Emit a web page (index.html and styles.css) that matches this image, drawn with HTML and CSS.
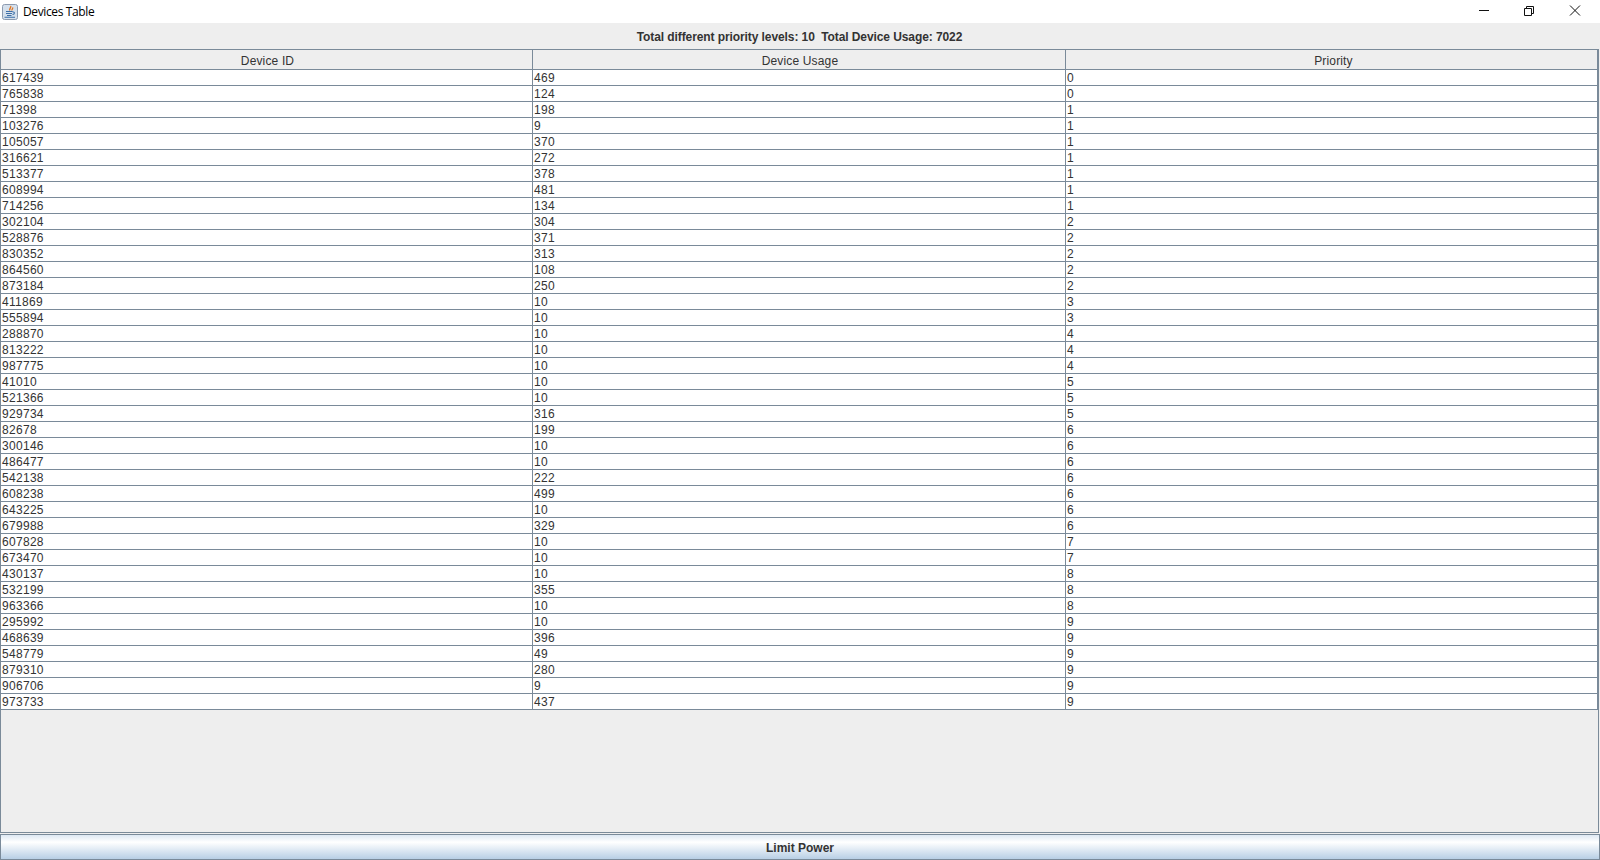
FILE: index.html
```html
<!DOCTYPE html>
<html lang="en">
<head>
    <meta charset="UTF-8">
    <meta name="viewport" content="width=device-width, initial-scale=1.0">
    <title>Devices Table</title>
    <link rel="stylesheet" href="styles.css">
</head>
<body>
    <header class="title-bar">
        <svg class="app-icon" width="16" height="16" viewBox="0 0 16 16">
            <rect x="0.5" y="0.5" width="15" height="15" rx="2" fill="#d5e0ec" stroke="#8c9bb0"/>
            <path d="M8.500 2c1.500 1.500-2 2.500-.5 4.500M10.500 3.500c1 1-1 1.500-.5 3" fill="none" stroke="#e2731c" stroke-width="1.300"/>
            <path d="M4 7.500h6.500M4 9.500h6M5 11.500h4.500M10.500 8c2.500-.5 2.500 2 0 2.500M2.500 13.200h10.500" fill="none" stroke="#3c6fa8" stroke-width="1.100"/>
        </svg>
        <span class="title-text">Devices Table</span>
        <div class="window-buttons">
            <svg class="win-btn" width="45" height="23" viewBox="0 0 45 23"><path d="M17 10.500h10" stroke="#111" fill="none"/></svg>
            <svg class="win-btn" width="45" height="23" viewBox="0 0 45 23"><path d="M17.500 8.500h7v7h-7zM19.500 8.500v-2h7v7h-2" stroke="#111" fill="none"/></svg>
            <svg class="win-btn" width="45" height="23" viewBox="0 0 45 23"><path d="M18 5.500l10 10M28 5.500l-10 10" stroke="#111" fill="none"/></svg>
        </div>
    </header>

    <main class="content">
        <div class="summary">Total different priority levels: 10&nbsp;&nbsp;Total Device Usage: 7022</div>

        <div class="scroll-pane">
            <table class="devices">
                <colgroup>
                    <col class="col-id">
                    <col class="col-usage">
                    <col>
                </colgroup>
                <thead>
                    <tr><th>Device ID</th><th>Device Usage</th><th>Priority</th></tr>
                </thead>
                <tbody>
                    <tr><td>617439</td><td>469</td><td>0</td></tr>
                    <tr><td>765838</td><td>124</td><td>0</td></tr>
                    <tr><td>71398</td><td>198</td><td>1</td></tr>
                    <tr><td>103276</td><td>9</td><td>1</td></tr>
                    <tr><td>105057</td><td>370</td><td>1</td></tr>
                    <tr><td>316621</td><td>272</td><td>1</td></tr>
                    <tr><td>513377</td><td>378</td><td>1</td></tr>
                    <tr><td>608994</td><td>481</td><td>1</td></tr>
                    <tr><td>714256</td><td>134</td><td>1</td></tr>
                    <tr><td>302104</td><td>304</td><td>2</td></tr>
                    <tr><td>528876</td><td>371</td><td>2</td></tr>
                    <tr><td>830352</td><td>313</td><td>2</td></tr>
                    <tr><td>864560</td><td>108</td><td>2</td></tr>
                    <tr><td>873184</td><td>250</td><td>2</td></tr>
                    <tr><td>411869</td><td>10</td><td>3</td></tr>
                    <tr><td>555894</td><td>10</td><td>3</td></tr>
                    <tr><td>288870</td><td>10</td><td>4</td></tr>
                    <tr><td>813222</td><td>10</td><td>4</td></tr>
                    <tr><td>987775</td><td>10</td><td>4</td></tr>
                    <tr><td>41010</td><td>10</td><td>5</td></tr>
                    <tr><td>521366</td><td>10</td><td>5</td></tr>
                    <tr><td>929734</td><td>316</td><td>5</td></tr>
                    <tr><td>82678</td><td>199</td><td>6</td></tr>
                    <tr><td>300146</td><td>10</td><td>6</td></tr>
                    <tr><td>486477</td><td>10</td><td>6</td></tr>
                    <tr><td>542138</td><td>222</td><td>6</td></tr>
                    <tr><td>608238</td><td>499</td><td>6</td></tr>
                    <tr><td>643225</td><td>10</td><td>6</td></tr>
                    <tr><td>679988</td><td>329</td><td>6</td></tr>
                    <tr><td>607828</td><td>10</td><td>7</td></tr>
                    <tr><td>673470</td><td>10</td><td>7</td></tr>
                    <tr><td>430137</td><td>10</td><td>8</td></tr>
                    <tr><td>532199</td><td>355</td><td>8</td></tr>
                    <tr><td>963366</td><td>10</td><td>8</td></tr>
                    <tr><td>295992</td><td>10</td><td>9</td></tr>
                    <tr><td>468639</td><td>396</td><td>9</td></tr>
                    <tr><td>548779</td><td>49</td><td>9</td></tr>
                    <tr><td>879310</td><td>280</td><td>9</td></tr>
                    <tr><td>906706</td><td>9</td><td>9</td></tr>
                    <tr><td>973733</td><td>437</td><td>9</td></tr>
                </tbody>
            </table>
        </div>

        <button class="limit-btn">Limit Power</button>
    </main>
</body>
</html>
```

FILE: styles.css
```css
html, body {
    height: 100%;
}
body {
    margin: 0;
    display: flex;
    flex-direction: column;
    height: 860px;
    overflow: hidden;
    background-color: #eeeeee;
    font-family: "Liberation Sans", Arial, sans-serif;
    font-size: 12px;
    color: #333333;
}
.title-bar {
    display: flex;
    align-items: center;
    flex: 0 0 23px;
    background-color: #ffffff;
    padding-left: 2px;
}
.app-icon {
    margin-right: 5px;
}
.title-text {
    font-family: "Open Sans", "Noto Sans", sans-serif;
    font-size: 12px;
    letter-spacing: -0.38px;
    color: #000000;
}
.window-buttons {
    display: flex;
    margin-left: auto;
    margin-right: 3px;
}
.win-btn {
    display: block;
}
.content {
    flex: 1;
    display: flex;
    flex-direction: column;
    min-height: 0;
}
.summary {
    flex: 0 0 26px;
    box-sizing: border-box;
    padding-top: 2px;
    padding-right: 1px;
    line-height: 24px;
    text-align: center;
    font-weight: bold;
    letter-spacing: -0.09px;
}
.scroll-pane {
    flex: 1;
    min-height: 0;
    margin: 0 1px 1px 0;
    border: 1px solid #7a8a99;
}
.devices {
    width: 1597px;
    table-layout: fixed;
    border-collapse: separate;
    border-spacing: 0;
    border-right: 1px solid #7a8a99;
    background-color: #ffffff;
}
.col-id {
    width: 532px;
}
.col-usage {
    width: 533px;
}
.devices th {
    height: 17px;
    padding: 2px 0 0 2px;
    font-weight: normal;
    text-align: center;
    letter-spacing: 0.15px;
    background-color: #eeeeee;
    border-bottom: 1px solid #7a8a99;
    border-right: 1px solid #7a8a99;
}
.devices td {
    height: 14px;
    padding: 1px 0 0 1px;
    line-height: 14px;
    letter-spacing: 0.3px;
    border-bottom: 1px solid #7a8a99;
    border-right: 1px solid #7a8a99;
    overflow: hidden;
}
.devices th:last-child,
.devices td:last-child {
    border-right: none;
}
.devices th:last-child {
    padding-left: 4px;
}
.limit-btn {
    flex: 0 0 26px;
    box-sizing: border-box;
    padding: 2px 0 0;
    width: 100%;
    font-family: "Liberation Sans", Arial, sans-serif;
    font-size: 12px;
    font-weight: bold;
    color: #333333;
    border: 1px solid #7a8a99;
    background: linear-gradient(to bottom, #dde8f3 0%, #ffffff 30%, #b8cfe5 100%);
}
```
